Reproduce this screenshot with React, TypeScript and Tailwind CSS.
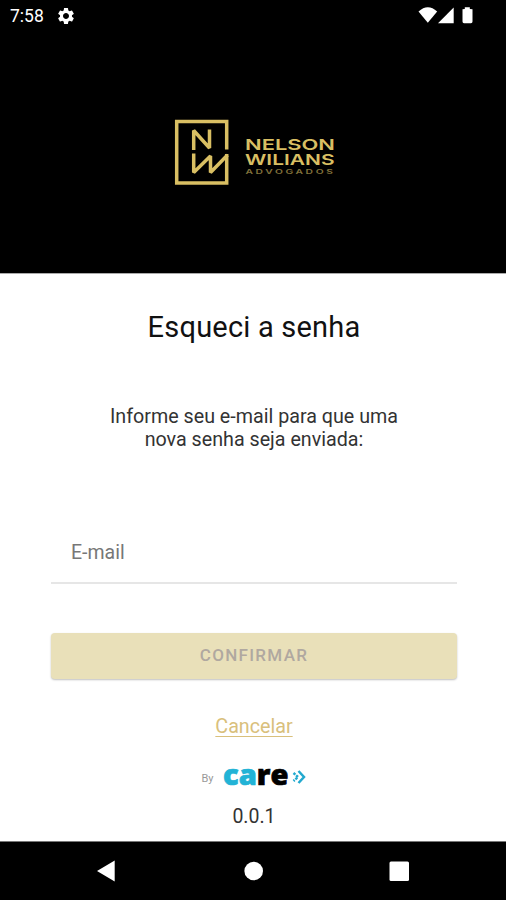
import React from 'react';
import { MdSettings } from 'react-icons/md';

function StatusBar() {
  return (
    <div className="flex h-8 items-center justify-between pl-[10px] pr-[32px]">
      <div className="flex items-center gap-[12px]">
        <span className="pt-px text-[17.5px] leading-none text-white">7:58</span>
        <MdSettings className="mb-px size-[20px] text-white" />
      </div>
      <svg className="h-[18px] w-14" viewBox="0 0 56 18" fill="#fff">
        <path d="M.5 4.500Q9.800-4 19.200 4.500L9.800 15.800z" />
        <path d="M20 16.200 35.700 .5V16.200z" />
        <path d="M44.500 2.300 46.800 2V.3h5V2l2.700.3V14.500q0 1.800-1.500 1.800H46q-1.500 0-1.500-1.800z" />
      </svg>
    </div>
  );
}

function Logo() {
  return (
    <svg
      className="h-[66px] w-[162px] overflow-visible"
      viewBox="0 0 162 66"
      fill="none"
      stroke="#d9bf63"
      strokeWidth="3.500"
    >
      <path d="M52.700 30.500V2.500H2.700V64H52.700V35" />
      <path strokeLinejoin="bevel" d="M19.700 31V11.500L35.500 29V10.500" />
      <path strokeLinejoin="bevel" d="M19.700 34.500V53.500L36.500 37V53.500L53.500 36" />
      <g fill="#d9bf63" stroke="none" fontFamily="Inter, sans-serif" fontWeight="600">
        <text x="71" y="30.500" fontSize="15" textLength="90" lengthAdjust="spacingAndGlyphs">NELSON</text>
        <text x="71" y="46" fontSize="15" textLength="89.500" lengthAdjust="spacingAndGlyphs">WILIANS</text>
        <text
          x="71.500"
          y="55.300"
          fontSize="6"
          opacity="0.6"
          letterSpacing="1.500"
          textLength="90"
          lengthAdjust="spacingAndGlyphs"
        >
          ADVOGADOS
        </text>
      </g>
    </svg>
  );
}

function CareLogo() {
  return (
    <svg className="h-7 w-[84px] overflow-visible" viewBox="0 0 84 28">
      <text
        x="0"
        y="22.500"
        fontFamily="'Open Sans', sans-serif"
        fontSize="29"
        fontWeight="800"
        textLength="65.500"
        lengthAdjust="spacingAndGlyphs"
        fill="#000"
        stroke="#000"
        strokeWidth="0.700"
      >
        <tspan fill="#22b3d6" stroke="#22b3d6">ca</tspan>re
      </text>
      <g fill="none" stroke="#22a9cf" strokeWidth="2.500">
        <path d="M75.500 9 81 15 75.500 21" />
        <path d="M70.500 11 75 15 70.500 19" strokeDasharray="2.500 1" />
      </g>
    </svg>
  );
}

function NavBar() {
  return (
    <div className="h-[59px] border-t border-[#777] bg-black">
      <svg className="h-[58px] w-full" viewBox="0 0 506 58" fill="#fff">
        <path d="M97 29 114.700 18.500V39.500z" />
        <circle cx="253.700" cy="29" r="9.300" />
        <rect x="389.500" y="19.500" width="19.500" height="19.500" rx="1.500" />
      </svg>
    </div>
  );
}

export default function App() {
  return (
    <div className="flex h-[900px] w-[506px] flex-col overflow-hidden bg-white font-['Roboto',sans-serif]">
      <header className="h-[273px] shrink-0 bg-black">
        <StatusBar />
        <div className="flex pl-[174px] pt-[87px]">
          <Logo />
        </div>
      </header>

      <main className="flex flex-1 flex-col items-center border-t border-[#aaa] pl-[2px]">
        <h1 className="mt-[35px] text-[29px] leading-[36px] tracking-[0.2px] text-[#111]">
          Esqueci a senha
        </h1>
        <p className="mt-[60px] text-center text-[19.700px] leading-[23px] text-[#333]">
          Informe seu e-mail para que uma
          <br />
          nova senha seja enviada:
        </p>

        <input
          type="email"
          placeholder="E-mail"
          className="mt-[71px] h-[62px] w-[406px] border-b-2 border-[#e6e6e6] px-5 text-[19.500px] outline-none placeholder:text-[#777]"
        />
        <button className="mt-[49px] h-[46px] w-[406px] rounded-[4px] bg-[#e9e0b9] text-[17px] font-medium tracking-[1.300px] text-[#b0a8a0] shadow-[0_1px_2px_rgba(0,0,0,0.25)]">
          CONFIRMAR
        </button>

        <a
          href="#"
          className="mt-[35px] text-[19.700px] leading-[26px] text-[#d9c07c] underline decoration-1 underline-offset-[3px]"
        >
          Cancelar
        </a>
        <div className="mt-[22px] flex items-center gap-[9px]">
          <span className="pt-1 text-[11px] leading-none text-[#999]">By</span>
          <CareLogo />
        </div>
        <span className="mt-[15px] text-[19.500px] leading-6 text-[#333]">0.0.1</span>
      </main>

      <NavBar />
    </div>
  );
}
